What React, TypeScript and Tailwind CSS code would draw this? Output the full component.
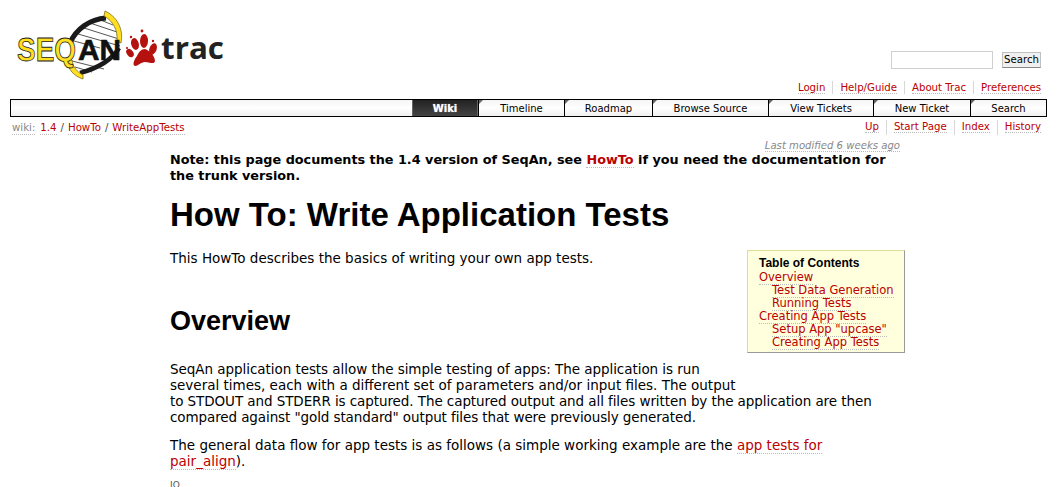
function L({ children, className = "" }: { children: React.ReactNode; className?: string }) {
  return <a className={`text-[#b00] border-b border-dotted border-[#bbb] ${className}`}>{children}</a>;
}

function Logo() {
  return (
    <svg width="226" height="87" viewBox="0 0 226 87" className="block">
      <g stroke="#555" strokeWidth="1">
        <path d="M98 19 L113 25M90 23 L117 32M84 28 L119 39M78 34 L120 46M74 41 L100 48" />
        <path d="M72 61 L104 69M75 67 L92 72" />
      </g>
      <path d="M70 43 C76 29 90 19 106 18" fill="none" stroke="#1a1a1a" strokeWidth="5" />
      <path d="M119 48 C112 60 98 68 80 73" fill="none" stroke="#1a1a1a" strokeWidth="4.5" />
      <path d="M67 60 C68 70 74 76 83 79 L83 75 C77 72 73 67 72 60Z" fill="#ffdf20" stroke="#6b5f10" strokeWidth="0.7" />
      <path d="M105 11 C116 16 124 28 121 43 L117 41 C118 30 113 21 104 16Z" fill="#ffdf20" stroke="#6b5f10" strokeWidth="0.7" />
      <text x="17" y="61" fontFamily="Liberation Sans" fontWeight="700" fontSize="33" fill="#ffdf20" stroke="#222" strokeWidth="0.8" textLength="59" lengthAdjust="spacingAndGlyphs">SEQ</text>
      <text x="78" y="60" fontFamily="Liberation Sans" fontWeight="700" fontSize="29" fill="#111" stroke="#111" strokeWidth="0.6" textLength="43" lengthAdjust="spacingAndGlyphs">AN</text>
      <g fill="#b5120f">
        <ellipse cx="135" cy="44" rx="3.8" ry="6" transform="rotate(-15 135 44)" />
        <ellipse cx="144" cy="41" rx="4" ry="7" transform="rotate(2 144 41)" />
        <ellipse cx="153" cy="49" rx="3.6" ry="6" transform="rotate(20 153 49)" />
        <ellipse cx="130" cy="53" rx="3.2" ry="4.6" transform="rotate(-35 130 53)" />
        <path d="M145 49 C151 51 155 57 155 61 C154 65 149 62 145 62 C141 62 138 66 135 66 C132 65 134 60 137 56 C139 52 141 49 145 49Z" />
        <circle cx="142" cy="31" r="1.4" />
        <circle cx="131" cy="37" r="1.2" />
        <circle cx="153" cy="41" r="1.2" />
        <circle cx="127" cy="48" r="1.1" />
      </g>
      <text x="161" y="59" fontFamily="Open Sans" fontWeight="700" fontSize="30" fill="#222" textLength="63" lengthAdjust="spacingAndGlyphs">trac</text>
    </svg>
  );
}

const tabs = [
  ["Timeline", "w-[86px]"],
  ["Roadmap", "w-[88px]"],
  ["Browse Source", "w-[116px]"],
  ["View Tickets", "w-[105px]"],
  ["New Ticket", "w-[97px]"],
  ["Search", "flex-1"],
];

export default function App() {
  return (
    <div className="h-[487px] w-[1057px] overflow-hidden bg-white font-['DejaVu_Sans',Verdana,sans-serif] text-black">
      <div className="flex h-[87px] items-start justify-between pr-[16px]">
        <Logo />
        <div className="mt-[51px] flex items-center gap-[9px]">
          <div className="h-[18px] w-[102px] border border-[#d0d0d0] bg-white" />
          <div className="flex h-[16px] w-[39px] items-center justify-center border border-[#c0c0c0] border-b-[#888] bg-[#f0f0f0] text-[10.2px]">Search</div>
        </div>
      </div>
      <div className="-mt-[6px] flex justify-end pr-[16px] text-[10.2px] leading-[13px]">
        <span className="border-r border-[#d7d7d7] pr-[7px]"><L>Login</L></span>
        <span className="border-r border-[#d7d7d7] px-[7px]"><L>Help/Guide</L></span>
        <span className="border-r border-[#d7d7d7] px-[7px]"><L>About Trac</L></span>
        <span className="pl-[7px]"><L>Preferences</L></span>
      </div>
      <div className="mx-[10px] mt-[5px] flex h-[18px] border border-black bg-gradient-to-b from-[#f5f5f5] via-white to-[#f0f0f0] text-[10px]">
        <div className="w-[401px]" />
        <div className="flex w-[66px] items-center justify-center border-x border-[#666] bg-gradient-to-b from-[#222] to-[#444] font-bold text-white [text-shadow:0_0_1px_#ccc]">Wiki</div>
        {tabs.map(([t, w]) => (
          <div key={t} className={`relative flex items-center justify-center border-l border-black ${w}`}>
            <span className="absolute left-0 top-0 h-0 w-0 border-r-[4px] border-t-[4px] border-r-transparent border-t-[#666]" />
            {t}
          </div>
        ))}
      </div>
      <div className="mt-[3px] flex justify-between pl-[12px] pr-[16px] text-[10.2px] leading-[13px]">
        <div className="flex gap-[4px] pt-[1px] text-[#888]">
          <span className="mr-[1px] border-b border-dotted border-[#bbb]">wiki:</span>
          <L>1.4</L>
          <span className="text-[#444]">/</span>
          <L>HowTo</L>
          <span className="text-[#444]">/</span>
          <L>WriteAppTests</L>
        </div>
        <div className="flex">
          <span className="border-r border-[#d7d7d7] pr-[7px]"><L>Up</L></span>
          <span className="border-r border-[#d7d7d7] px-[7px]"><L>Start Page</L></span>
          <span className="border-r border-[#d7d7d7] px-[7px]"><L>Index</L></span>
          <span className="pl-[7px]"><L>History</L></span>
        </div>
      </div>
      <div className="mt-[4px] pr-[157px] text-right text-[10.1px] italic leading-[13px] text-[#888]">
        <span className="border-b border-dotted border-[#bbb]">Last modified 6 weeks ago</span>
      </div>
      <div className="ml-[170px] mr-[152px] text-[13.5px] leading-[16px]">
        <div className="text-[12.8px] font-bold">
          Note: this page documents the 1.4 version of SeqAn, see <L>HowTo</L> if you need the documentation for<br />the trunk version.
        </div>
        <h1 className="mt-[12px] font-['Liberation_Sans',Arial,sans-serif] text-[33px] font-bold leading-[38px]">How To: Write Application Tests</h1>
        <div className="float-right mt-[16px] h-[103px] w-[158px] border border-[#dd9] border-b-[#999] border-r-[#999] bg-[#ffd] pl-[11px] pt-[6px] text-[11.5px] leading-[13px]">
          <div className="mb-[2px] font-['Liberation_Sans',Arial,sans-serif] text-[12px] font-bold leading-[12px]">Table of Contents</div>
          <div><L>Overview</L></div>
          <div className="pl-[13px]"><L>Test Data Generation</L></div>
          <div className="pl-[13px]"><L>Running Tests</L></div>
          <div><L>Creating App Tests</L></div>
          <div className="pl-[13px]"><L>Setup App "upcase"</L></div>
          <div className="pl-[13px]"><L>Creating App Tests</L></div>
        </div>
        <p className="mt-[16px]">This HowTo describes the basics of writing your own app tests.</p>
        <h2 className="mt-[39px] font-['Liberation_Sans',Arial,sans-serif] text-[27px] font-bold leading-[32px]">Overview</h2>
        <p className="mt-[24px] whitespace-nowrap">
          <span className="tracking-[-0.05px]">SeqAn application tests allow the simple testing of apps: The application is run</span><br />
          several times, each with a different set of parameters and/or input files. The output<br />
          <span className="tracking-[-0.08px]">to STDOUT and STDERR is captured. The captured output and all files written by the application are then</span><br />
          <span className="tracking-[-0.1px]">compared against "gold standard" output files that were previously generated.</span>
        </p>
        <p className="mt-[12px]">
          The general data flow for app tests is as follows (a simple working example are the <L>app tests for<br />pair_align</L>).
        </p>
        <div className="mt-[10px] text-[9px] leading-[12px] text-[#555]">IO</div>
      </div>
    </div>
  );
}
